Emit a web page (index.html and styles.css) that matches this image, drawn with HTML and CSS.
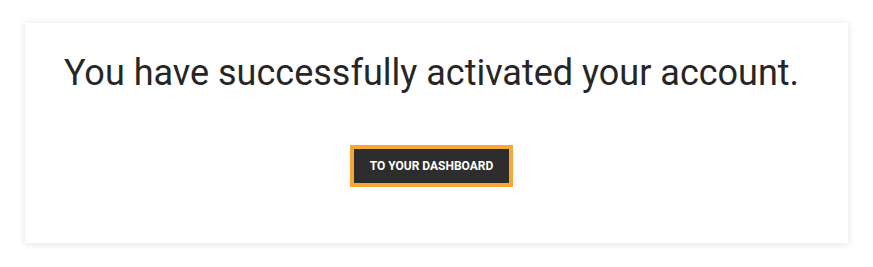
FILE: index.html
```html
<!DOCTYPE html>
<html lang="en">
<head>
<meta charset="utf-8">
<title>Account activated</title>
<link rel="stylesheet" href="styles.css">
</head>
<body>
<main class="page">
  <section class="card">
    <h1 class="title">You have successfully activated your account.</h1>
    <a class="btn" href="#">To your dashboard</a>
  </section>
</main>
</body>
</html>
```
FILE: styles.css
```css
* { box-sizing: border-box; }
html, body { margin: 0; padding: 0; background: #fff; }
body { font-family: Roboto, "Liberation Sans", Arial, sans-serif; color: #222; }
.page { padding: 23px 25px 24px 25px; }
.card {
  width: 823px;
  height: 220px;
  background: #fff;
  box-shadow: 0 1px 8px rgba(0,0,0,0.12);
  display: flex;
  flex-direction: column;
  align-items: center;
  padding: 28px 10px 0 0;
}
.title {
  margin: 0;
  font-size: 36px;
  font-weight: 400;
  line-height: 44px;
  color: #262626;
  letter-spacing: 0;
}
.btn {
  margin-top: 50px;
  display: inline-block;
  background: #2d2d2d;
  border: 4px solid #f8a634;
  color: #fff;
  text-decoration: none;
  text-transform: uppercase;
  font-weight: 700;
  font-size: 12px;
  line-height: 34px;
  padding: 0 16px;
}
```
